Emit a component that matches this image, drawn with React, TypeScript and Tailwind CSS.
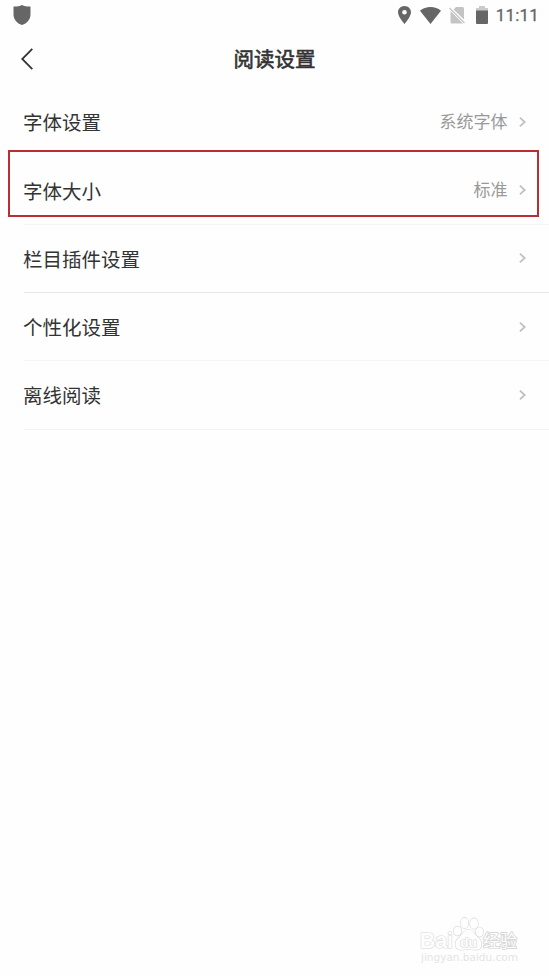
import clsx from 'clsx'

interface SettingItem {
  label: string
  value?: string
  divider: boolean
  dividerColor?: string
}

const settings: SettingItem[] = [
  { label: '字体设置', value: '系统字体', divider: false },
  { label: '字体大小', value: '标准', divider: true },
  { label: '栏目插件设置', divider: true, dividerColor: 'border-[#e6e6e6]' },
  { label: '个性化设置', divider: true },
  { label: '离线阅读', divider: true },
]

function StatusBar() {
  return (
    <div className="flex h-[30px] items-center justify-between pl-[13px] pr-[10px] text-[#666666]">
      <svg className="h-5 w-[18px]" viewBox="0 0 18 20" fill="currentColor">
        <path d="M9 0C6.500 1.300 3.500 1.700.5 1.600V9.500C.5 14.500 4 18.500 9 20C14 18.500 17.500 14.500 17.500 9.500V1.600C14.500 1.700 11.500 1.300 9 0Z" />
      </svg>
      <div className="flex items-center">
        {/* Location */}
        <svg className="h-[18px] w-[13px]" viewBox="5 2 14 20" preserveAspectRatio="none" fill="currentColor">
          <path d="M12 2C8.130 2 5 5.130 5 9c0 5.250 7 13 7 13s7-7.750 7-13c0-3.870-3.130-7-7-7zm0 9.500a2.500 2.500 0 1 1 0-5 2.500 2.500 0 0 1 0 5z" />
        </svg>
        {/* Wifi */}
        <svg className="ml-[9px] h-[17px] w-[21px]" viewBox="0 0 21 17" fill="currentColor">
          <path d="M10.500 17L21 3.700C18 1.300 14.500 0 10.500 0S3 1.300 0 3.700Z" />
        </svg>
        {/* No sim */}
        <svg className="ml-2 h-[17px] w-4" viewBox="0 0 16 17" fill="#c4c4c4">
          <path d="M7 0H13.500Q15 0 15 1.500V12.500L4.500 2.500ZM1.500 4L14 16.500H3Q1.500 16.500 1.500 15Z" />
          <path d="M.5 1L15.500 16" stroke="#c4c4c4" strokeWidth="1.300" />
        </svg>
        {/* Battery */}
        <svg className="ml-[11px] h-[18px] w-3" viewBox="0 0 12 18">
          <path d="M0 2.500Q0 2 .7 2H3V0H9V2H11.300Q12 2 12 2.500V6H0Z" fill="#cbcbcb" />
          <path d="M0 4.500H12V17Q12 18 11 18H1Q0 18 0 17Z" fill="currentColor" />
        </svg>
        <span className="ml-[8px] font-[Roboto,sans-serif] text-[17px] leading-[30px] tracking-[0.200px] [-webkit-text-stroke:0.300px_#666666]">11:11</span>
      </div>
    </div>
  )
}

function Header() {
  return (
    <header className="grid h-[58.200px] grid-cols-[1fr_auto_1fr] items-center">
      <svg className="ml-[21px] h-[22px] w-3" viewBox="0 0 12 22" fill="none" stroke="#333333" strokeWidth="1.800">
        <path d="M11.300 .8L1.200 11L11.300 21.200" />
      </svg>
      <h1 className="pb-[2px] text-[20.500px] leading-[56px] text-[#333333] [-webkit-text-stroke:0.600px_#333333]">阅读设置</h1>
    </header>
  )
}

function SettingRow({ item }: { item: SettingItem }) {
  return (
    <div
      className={clsx(
        'ml-6 flex h-[68.300px] items-center justify-between border-b pr-[23px]',
        item.divider ? item.dividerColor || 'border-[#f4f4f4]' : 'border-transparent',
      )}
    >
      <span className="-ml-px text-[19.500px] text-[#333333]">{item.label}</span>
      <div className="flex items-center gap-[11.500px]">
        {item.value && <span className="pb-[2px] text-[17px] text-[#999999]">{item.value}</span>}
        <svg className="h-[10px] w-[7px]" viewBox="0 0 7 10" fill="none" stroke="#bfbfbf" strokeWidth="1.700">
          <path d="M.9 .7L5.700 5L.9 9.300" />
        </svg>
      </div>
    </div>
  )
}

function Watermark() {
  return (
    <svg
      className="absolute top-[914px] left-[417px] h-[54px] w-[106px]"
      viewBox="0 0 106 54"
      fill="#fefefe"
      stroke="#d8d8d8"
      strokeWidth="1.200"
      paintOrder="stroke"
      strokeLinejoin="round"
    >
      <text x="3" y="34" fontSize="22" fontWeight="700" textLength="33" lengthAdjust="spacingAndGlyphs" fontFamily="Liberation Sans, sans-serif">Bai</text>
      <ellipse cx="40.500" cy="17" rx="3.800" ry="4.600" />
      <ellipse cx="47.500" cy="9" rx="4" ry="5.300" />
      <ellipse cx="57" cy="9.500" rx="4" ry="5.300" />
      <ellipse cx="62.500" cy="18" rx="3.800" ry="4.700" />
      <path d="M51.500 15.500C47 15.500 45.500 20.500 41.500 24C36.500 28.500 38 35.500 43.500 35.800C47 36 49 35 51.500 35S56 36 60 35.800C65 35.500 66.500 28.500 61.500 24C57.500 20.500 56 15.500 51.500 15.500Z" />
      <text x="43" y="32.500" fontSize="13" fontWeight="700" textLength="17" lengthAdjust="spacingAndGlyphs" fontFamily="Liberation Sans, sans-serif">du</text>
      <text x="66" y="33" fontSize="17" fontWeight="400" strokeWidth="1.800" fontFamily="Noto Sans CJK SC, sans-serif">经验</text>
      <text x="4" y="47" fontSize="11" textLength="97" lengthAdjust="spacingAndGlyphs" fill="#e4e4e4" stroke="none" fontFamily="DejaVu Sans, sans-serif">jingyan.baidu.com</text>
    </svg>
  )
}

export default function App() {
  return (
    <div className="relative h-[976px] w-full overflow-hidden bg-[#fefefe] font-['Noto_Sans_CJK_SC',sans-serif]">
      <StatusBar />
      <Header />
      <main>
        {settings.map((item) => (
          <SettingRow key={item.label} item={item} />
        ))}
      </main>

      {/* Highlight around the font size row */}
      <div className="absolute top-[150px] left-2 h-[67px] w-[531px] border-2 border-[#b92e34]" />
      <Watermark />
    </div>
  )
}
